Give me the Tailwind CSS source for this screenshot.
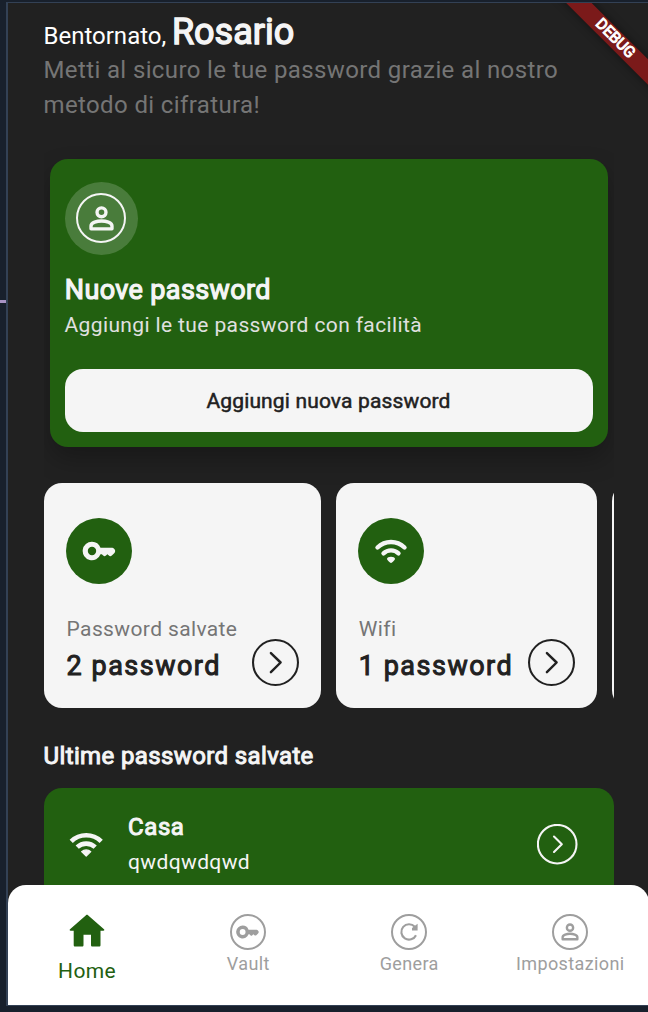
<!DOCTYPE html>
<html lang="it">
<head>
<meta charset="utf-8">
<meta name="viewport" content="width=device-width, initial-scale=1">
<title>Password manager</title>
<script src="https://cdn.jsdelivr.net/npm/@tailwindcss/browser@4"></script>
</head>
<body class="relative h-[1012px] w-[648px] overflow-hidden bg-[#18202c] pt-[2px] font-[Roboto,sans-serif]">
<svg class="hidden">
  <symbol id="person" viewBox="0 0 24 24"><g fill="none" stroke="currentColor" stroke-width="2.200"><circle cx="12" cy="8" r="2.900"/><path stroke-linejoin="round" d="M5.200 18.700v-1.900c0-2.200 4-3.200 6.800-3.200s6.800 1 6.800 3.200v1.900z"/></g></symbol>
  <symbol id="key" viewBox="0 0 36 20"><path fill="currentColor" fill-rule="evenodd" d="M11 .8a9.200 9.200 0 0 1 8.500 6h11.700c1 0 3 1.600 3 3.300 0 1.600-1.600 2.900-3.100 4.200-1.400 1.200-2.200 1.200-3.500 0l-1.200-1.100-1.400 1.300c-1.200 1.100-1.700 1.100-2.800 0l-1.400-1.300h-1.300A9.200 9.200 0 1 1 11 .8m0 5a4.200 4.200 0 1 0 0 8.400 4.200 4.200 0 0 0 0-8.400"/></symbol>
  <symbol id="chev" viewBox="0 0 46 46"><circle cx="23" cy="23" r="22" fill="none" stroke="currentColor" stroke-width="2"/><path d="M18.500 13.800 28 23l-9.500 9.400" fill="none" stroke="currentColor" stroke-width="2.400" stroke-linecap="round" stroke-linejoin="round"/></symbol>
</svg>

<div class="absolute top-[300px] left-0 h-[3px] w-[6px] bg-[#a893c4]"></div>

<div class="relative ml-[6px] h-[1004px] w-[650px] border-t border-b border-l-2 border-[#334155] bg-[#212121]">
  <div class="h-full overflow-hidden">
    <header class="pt-[8px] pl-[35.5px] text-[24px]">
      <h1 class="h-[42px] leading-[42px] whitespace-nowrap text-white">Bentornato, <span class="-ml-[0.300px] text-[36px] text-[#f5f5f5] [-webkit-text-stroke:1.400px_#f5f5f5]">Rosario</span></h1>
      <p class="w-[560px] leading-[34.500px] tracking-[0.375px] text-[#757575]">Metti al sicuro le tue password grazie al nostro<br>metodo di cifratura!</p>
    </header>

    <main class="ml-[35.500px] w-[570px] overflow-hidden">
      <section class="mt-[37px] ml-[6px] h-[288px] w-[558px] rounded-[18px] bg-[#226010] px-[15px] pt-[22.500px] shadow-[0_12px_24px_rgba(0,0,0,0.25)]">
        <div class="flex size-[73.500px] items-center justify-center rounded-full bg-white/18">
          <div class="flex size-[50px] items-center justify-center rounded-full border-2 border-[#f5f5f5] text-[#f5f5f5]">
            <svg class="size-[37px] shrink-0"><use href="#person"/></svg>
          </div>
        </div>
        <h2 class="mt-[17px] ml-[0.300px] text-[27px] leading-[36px] tracking-[0.375px] text-[#f5f5f5] [-webkit-text-stroke:1.200px_#f5f5f5]">Nuove password</h2>
        <p class="mt-[1.500px] text-[21px] leading-[30px] tracking-[0.375px] text-[#e0e0e0]">Aggiungi le tue password con facilità</p>
        <button class="mt-[29.500px] block h-[63px] w-full rounded-[18px] bg-[#f5f5f5] pt-[2px] text-[21px] tracking-[0.150px] text-[#212121] [-webkit-text-stroke:0.500px_#212121]">Aggiungi nuova password</button>
      </section>

      <section class="mt-[36px] flex gap-[15px]">
        <article class="h-[225px] w-[277px] shrink-0 rounded-[18px] bg-[#f5f5f5] px-[22.500px] pt-[34.500px]">
          <div class="flex size-[66px] items-center justify-center rounded-full bg-[#226010] text-[#f5f5f5]"><svg class="h-[20px] w-[36px]"><use href="#key"/></svg></div>
          <div class="flex justify-between pt-[30px]">
            <div class="pl-[0.600px]">
              <p class="text-[21px] leading-[30px] tracking-[0.375px] text-[#757575]">Password salvate</p>
              <p class="mt-[4px] text-[27px] leading-[36px] tracking-[1.500px] whitespace-nowrap text-[#212121] [-webkit-text-stroke:1px_#212121]">2 password</p>
            </div>
            <svg class="mt-[25px] -mr-[0.500px] size-[47px] shrink-0 text-[#212121]"><use href="#chev"/></svg>
          </div>
        </article>
        <article class="h-[225px] w-[261px] shrink-0 rounded-[18px] bg-[#f5f5f5] px-[22.500px] pt-[34.500px]">
          <div class="flex size-[66px] items-center justify-center rounded-full bg-[#226010] text-[#f5f5f5]">
            <svg class="h-[28px] w-[36px]" viewBox="0 0 36 28" fill="none" stroke="currentColor" stroke-width="4.400" stroke-linecap="round"><path d="M4.500 10.500a19.500 19.500 0 0 1 27 0M10.500 16.300a11 11 0 0 1 15 0"/><path fill="currentColor" stroke="none" d="M14 21.800c0-2.800 8-2.800 8 0 0 1.300-1.600 2.500-2.700 3.500-.9.900-1.700.9-2.600 0-1.100-1-2.700-2.200-2.700-3.500"/></svg>
          </div>
          <div class="flex justify-between pt-[30px]">
            <div class="pl-[0.800px]">
              <p class="text-[21px] leading-[30px] tracking-[0.375px] text-[#757575]">Wifi</p>
              <p class="mt-[4px] text-[27px] leading-[36px] tracking-[1.500px] whitespace-nowrap text-[#212121] [-webkit-text-stroke:1px_#212121]">1 password</p>
            </div>
            <svg class="mt-[25px] -mr-[0.500px] size-[47px] shrink-0 text-[#212121]"><use href="#chev"/></svg>
          </div>
        </article>
        <article class="h-[225px] w-[261px] shrink-0 rounded-[18px] bg-[#f5f5f5]"></article>
      </section>

      <h3 class="mt-[31px] text-[24px] leading-[34px] tracking-[0.375px] text-[#f5f5f5] [-webkit-text-stroke:1px_#f5f5f5]">Ultime password salvate</h3>

      <section class="mt-[14.500px] flex h-[130px] rounded-t-[18px] bg-[#226010] pt-[24.500px] pr-[36px] pl-[24px] text-[#f5f5f5]">
        <svg class="mt-[17.500px] h-[28px] w-[36px]" viewBox="0 0 36 28" fill="none" stroke="currentColor"><path stroke-width="4.600" stroke-linejoin="round" d="M3.200 11.300a21.500 21.500 0 0 1 30 0M9.200 17.200a13 13 0 0 1 18 0"/><path fill="currentColor" stroke="currentColor" stroke-width="1.200" stroke-linejoin="round" d="M13.600 21.600a7 7 0 0 1 9.200 0l-4.600 4.600z"/></svg>
        <div class="ml-[24.500px] grow">
          <p class="text-[24px] leading-[30px] tracking-[0.600px] [-webkit-text-stroke:1px_#f5f5f5]">Casa</p>
          <p class="mt-[4.500px] text-[21px] leading-[30px] tracking-[0.375px]">qwdqwdqwd</p>
        </div>
        <svg class="mt-[12px] size-[41px] shrink-0" viewBox="0 0 41 41" fill="none" stroke="currentColor" stroke-width="2.100"><circle cx="20.200" cy="20.200" r="19.300"/><path d="M17 12.600l7.800 7.700-7.800 7.700" stroke-linecap="round" stroke-linejoin="round"/></svg>
      </section>
    </main>
  </div>

  <nav class="absolute bottom-0 left-0 h-[120px] w-[641px] rounded-t-[18px] bg-white">
    <div class="-ml-[2px] grid grid-cols-[repeat(4,161px)] text-[18px] leading-[24px] tracking-[0.375px] text-[#9e9e9e]">
      <a class="flex flex-col items-center pt-[28.500px] text-[#226010]">
        <svg class="h-[33px] w-[36px]" viewBox="0 0 36 33" fill="currentColor"><path d="M17 1.200c.7-.6 1.300-.6 2 0L35 15.300c.7.700.3 1.500-.6 1.500h-2.900V31c0 1-.5 1.500-1.500 1.500h-6.500c-1 0-1.500-.5-1.500-1.500V20.800h-7.500V31c0 1-.5 1.500-1.500 1.500H6.200c-1 0-1.500-.5-1.500-1.500V16.800H1.600c-.9 0-1.300-.8-.6-1.500z"/></svg>
        <span class="mt-[9px] pl-[1.200px] text-[21px] leading-[30px] tracking-[0.375px]">Home</span>
      </a>
      <a class="flex flex-col items-center pt-[29px]">
        <span class="flex size-[36px] items-center justify-center rounded-full border-2 border-[#9e9e9e]"><svg class="h-[14px] w-[25px]"><use href="#key"/></svg></span>
        <span class="mt-[2px] pl-[1.500px]">Vault</span>
      </a>
      <a class="flex flex-col items-center pt-[29px]">
        <span class="flex size-[36px] items-center justify-center rounded-full border-2 border-[#9e9e9e]"><svg class="size-[20px]" viewBox="0 0 20 20" fill="none" stroke="currentColor" stroke-width="2.100"><path d="M17 13.200a7.700 7.700 0 1 1-1.200-8.400"/><path fill="currentColor" stroke="none" d="M18.600 1.800v6.700h-5.600v-2.400z"/></svg></span>
        <span class="mt-[2px] pl-[1.500px]">Genera</span>
      </a>
      <a class="flex flex-col items-center pt-[29px]">
        <span class="flex size-[36px] items-center justify-center rounded-full border-2 border-[#9e9e9e]"><svg class="size-[26px] shrink-0"><use href="#person"/></svg></span>
        <span class="mt-[2px] pl-[1.500px]">Impostazioni</span>
      </a>
    </div>
  </nav>

  <div class="absolute top-0 right-[8px] size-[110px] overflow-hidden">
    <div class="absolute top-[26.500px] left-[-13.300px] flex h-[17.700px] w-[180px] rotate-45 items-center justify-center bg-[#7b1a1a] text-[15.300px] leading-none text-white shadow-[0_0_9px_rgba(0,0,0,0.5)] [-webkit-text-stroke:1px_#fff]">DEBUG</div>
  </div>
</div>
</body>
</html>
